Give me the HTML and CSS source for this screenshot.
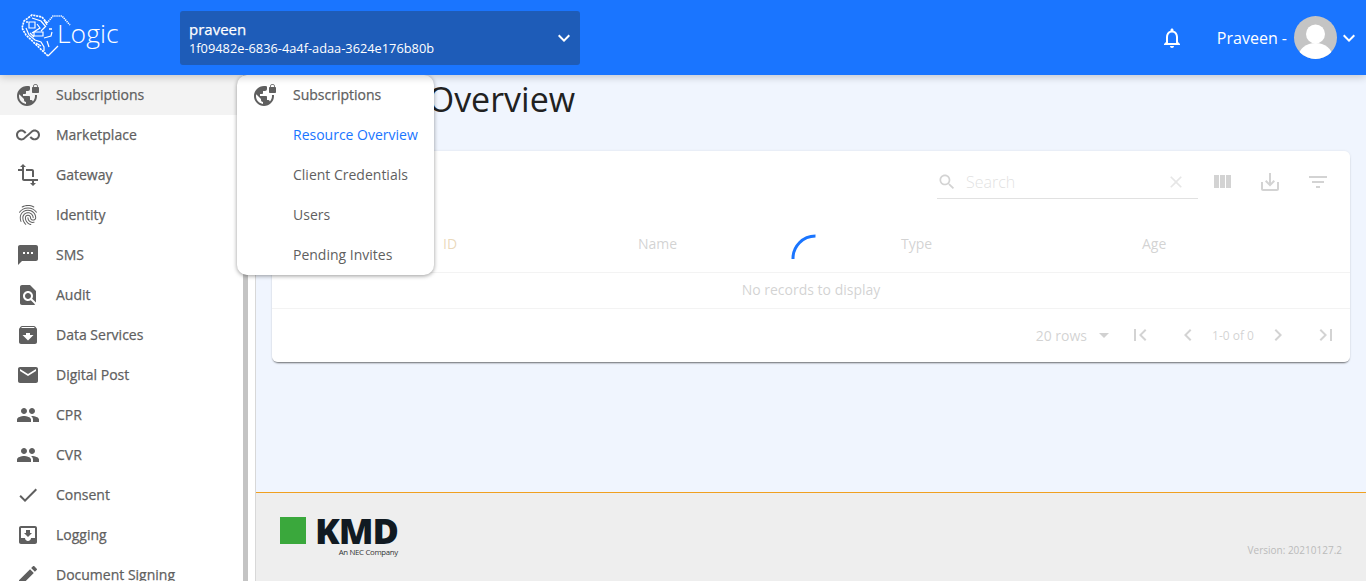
FILE: index.html
```html
<!DOCTYPE html>
<html>
	<head>
		<meta charset="UTF-8">
		<title>Resource Overview</title>
		<link rel="stylesheet" href="styles.css">
	</head>
	<body>
		<svg class="defs" width="0" height="0">
			<symbol id="i-vpn" viewBox="0 0 24 24"><path d="M22 4v-.5C22 2.12 20.88 1 19.5 1S17 2.12 17 3.5V4c-.55 0-1 .45-1 1v4c0 .55.45 1 1 1h5c.55 0 1-.45 1-1V5c0-.55-.45-1-1-1zm-.8 0h-3.4v-.5c0-.94.76-1.7 1.7-1.7s1.7.76 1.7 1.7V4zm-2.28 8c.04.33.08.66.08 1 0 2.08-.8 3.97-2.1 5.39-.26-.81-1-1.39-1.9-1.39h-1v-3c0-.55-.45-1-1-1H7v-2h2c.55 0 1-.45 1-1V8h2c1.1 0 2-.9 2-2V3.46c-.95-.3-1.95-.46-3-.46C5.48 3 1 7.48 1 13s4.48 10 10 10 10-4.48 10-10c0-.34-.02-.67-.05-1h-2.03zM10 20.93c-3.95-.49-7-3.85-7-7.93 0-.62.08-1.21.21-1.79L8 16v1c0 1.1.9 2 2 2v1.93z"/></symbol>
			<symbol id="i-inf" viewBox="0 0 24 24"><path d="M18.6 6.62c-1.44 0-2.8.56-3.77 1.53L12 10.66 10.48 12h.01L7.8 14.39c-.64.64-1.49.99-2.4.99-1.87 0-3.39-1.51-3.39-3.38S3.53 8.62 5.4 8.62c.91 0 1.76.35 2.44 1.03l1.13 1 1.51-1.34L9.22 8.2C8.2 7.18 6.84 6.62 5.4 6.62 2.42 6.62 0 9.04 0 12s2.42 5.38 5.4 5.38c1.44 0 2.8-.56 3.77-1.53l2.83-2.5.01.01L13.52 12h-.01l2.69-2.39c.64-.64 1.49-.99 2.4-.99 1.87 0 3.39 1.51 3.39 3.38s-1.52 3.38-3.39 3.38c-.9 0-1.76-.35-2.44-1.03l-1.14-1.01-1.51 1.34 1.27 1.12c1.02 1.01 2.37 1.57 3.82 1.57 2.98 0 5.4-2.41 5.4-5.38s-2.42-5.37-5.4-5.37z"/></symbol>
			<symbol id="i-transform" viewBox="0 0 24 24"><path d="M22 18v-2H8V4h2L7 1 4 4h2v2H2v2h4v8c0 1.1.9 2 2 2h8v2h-2l3 3 3-3h-2v-2h4zM10 8h6v6h2V8c0-1.1-.9-2-2-2h-6v2z"/></symbol>
			<symbol id="i-finger" viewBox="0 0 24 24"><path d="M17.81 4.47c-.08 0-.16-.02-.23-.06C15.66 3.42 14 3 12.01 3c-1.98 0-3.86.47-5.57 1.41-.24.13-.54.04-.68-.2-.13-.24-.04-.55.2-.68C7.82 2.52 9.86 2 12.01 2c2.13 0 3.99.47 6.03 1.52.25.13.34.43.21.67-.09.18-.26.28-.44.28zM3.5 9.72c-.1 0-.2-.03-.29-.09-.23-.16-.28-.47-.12-.7.99-1.4 2.25-2.5 3.75-3.27C9.98 4.04 14 4.03 17.15 5.65c1.5.77 2.76 1.86 3.75 3.25.16.22.11.54-.12.7-.23.16-.54.11-.7-.12-.9-1.26-2.04-2.25-3.39-2.94-2.87-1.47-6.54-1.47-9.4.01-1.36.7-2.5 1.7-3.4 2.96-.08.14-.23.21-.39.21zm6.25 12.07c-.13 0-.26-.05-.35-.15-.87-.87-1.34-1.43-2.01-2.64-.69-1.23-1.05-2.73-1.05-4.34 0-2.97 2.54-5.39 5.66-5.39s5.66 2.42 5.66 5.39c0 .28-.22.5-.5.5s-.5-.22-.5-.5c0-2.42-2.09-4.39-4.66-4.39-2.57 0-4.66 1.97-4.66 4.39 0 1.44.32 2.77.93 3.85.64 1.15 1.08 1.64 1.85 2.42.19.2.19.51 0 .71-.11.1-.24.15-.37.15zm7.17-1.85c-1.19 0-2.24-.3-3.1-.89-1.49-1.01-2.38-2.65-2.38-4.39 0-.28.22-.5.5-.5s.5.22.5.5c0 1.41.72 2.74 1.94 3.56.71.48 1.54.71 2.54.71.24 0 .64-.03 1.04-.1.27-.05.53.13.58.41.05.27-.13.53-.41.58-.57.11-1.07.12-1.21.12zM14.91 22c-.04 0-.09-.01-.13-.02-1.59-.44-2.63-1.03-3.72-2.1-1.4-1.39-2.17-3.24-2.17-5.22 0-1.62 1.38-2.94 3.08-2.94 1.7 0 3.08 1.32 3.08 2.94 0 1.07.93 1.94 2.08 1.94s2.08-.87 2.08-1.94c0-3.77-3.25-6.83-7.25-6.83-2.84 0-5.44 1.58-6.61 4.03-.39.81-.59 1.76-.59 2.8 0 .78.07 2.01.67 3.61.1.26-.03.55-.29.64-.26.1-.55-.04-.64-.29-.49-1.31-.73-2.61-.73-3.96 0-1.2.23-2.29.68-3.24 1.33-2.79 4.28-4.6 7.51-4.6 4.55 0 8.25 3.51 8.25 7.83 0 1.62-1.38 2.94-3.08 2.94s-3.08-1.32-3.08-2.94c0-1.07-.93-1.94-2.08-1.94s-2.08.87-2.08 1.94c0 1.71.66 3.31 1.87 4.51.95.94 1.86 1.46 3.27 1.85.27.07.42.35.35.61-.05.23-.26.38-.47.38z"/></symbol>
			<symbol id="i-sms" viewBox="0 0 24 24"><path d="M20 2H4c-1.1 0-1.99.9-1.99 2L2 22l4-4h14c1.1 0 2-.9 2-2V4c0-1.1-.9-2-2-2zM9 11H7V9h2v2zm4 0h-2V9h2v2zm4 0h-2V9h2v2z"/></symbol>
			<symbol id="i-find" viewBox="0 0 24 24"><path d="M20 19.59V8l-6-6H6c-1.1 0-1.99.9-1.99 2L4 20c0 1.1.89 2 1.99 2H18c.45 0 .85-.15 1.19-.4l-4.43-4.43c-.8.52-1.74.83-2.76.83-2.76 0-5-2.24-5-5s2.24-5 5-5 5 2.24 5 5c0 1.02-.31 1.96-.83 2.75L20 19.59zM9 13c0 1.66 1.34 3 3 3s3-1.34 3-3-1.34-3-3-3-3 1.34-3 3z"/></symbol>
			<symbol id="i-archive" viewBox="0 0 24 24"><path d="M20.54 5.23l-1.39-1.68C18.88 3.21 18.47 3 18 3H6c-.47 0-.88.21-1.16.55L3.46 5.23C3.17 5.57 3 6.02 3 6.5V19c0 1.1.9 2 2 2h14c1.1 0 2-.9 2-2V6.5c0-.48-.17-.93-.46-1.27zM12 17.5L6.5 12H10v-2h4v2h3.5L12 17.5zM5.12 5l.81-1h12l.94 1H5.12z"/></symbol>
			<symbol id="i-mail" viewBox="0 0 24 24"><path d="M20 4H4c-1.1 0-1.99.9-1.99 2L2 18c0 1.1.9 2 2 2h16c1.1 0 2-.9 2-2V6c0-1.1-.9-2-2-2zm0 4l-8 5-8-5V6l8 5 8-5v2z"/></symbol>
			<symbol id="i-people" viewBox="0 0 24 24"><path d="M16 11c1.66 0 2.99-1.34 2.99-3S17.66 5 16 5c-1.66 0-3 1.34-3 3s1.34 3 3 3zm-8 0c1.66 0 2.99-1.34 2.99-3S9.66 5 8 5C6.34 5 5 6.34 5 8s1.34 3 3 3zm0 2c-2.33 0-7 1.17-7 3.5V19h14v-2.5c0-2.33-4.67-3.5-7-3.5zm8 0c-.29 0-.62.02-.97.05 1.16.84 1.97 1.97 1.97 3.45V19h6v-2.5c0-2.33-4.67-3.5-7-3.5z"/></symbol>
			<symbol id="i-check" viewBox="0 0 24 24"><path d="M9 16.17L4.83 12l-1.42 1.41L9 19 21 7l-1.41-1.41z"/></symbol>
			<symbol id="i-inbox" viewBox="0 0 24 24"><path d="M19 3H4.99c-1.11 0-1.98.89-1.98 2L3 19c0 1.1.88 2 1.99 2H19c1.1 0 2-.9 2-2V5c0-1.11-.9-2-2-2zm0 12h-4c0 1.66-1.35 3-3 3s-3-1.34-3-3H4.99V5H19v10zm-3-5h-2V7h-4v3H8l4 4 4-4z"/></symbol>
			<symbol id="i-edit" viewBox="0 0 24 24"><path d="M3 17.25V21h3.75L17.81 9.94l-3.75-3.75L3 17.25zM20.71 7.04c.39-.39.39-1.02 0-1.41l-2.34-2.34c-.39-.39-1.02-.39-1.41 0l-1.83 1.83 3.75 3.75 1.83-1.83z"/></symbol>
			<symbol id="i-down" viewBox="0 0 24 24"><path d="M7.41 8.59L12 13.17l4.59-4.58L18 10l-6 6-6-6 1.41-1.41z"/></symbol>
			<symbol id="i-bell" viewBox="0 0 24 24"><path d="M12 22c1.1 0 2-.9 2-2h-4c0 1.1.9 2 2 2zm6-6v-5c0-3.07-1.63-5.64-4.5-6.32V4c0-.83-.67-1.5-1.5-1.5s-1.5.67-1.5 1.5v.68C7.64 5.36 6 7.92 6 11v5l-2 2v1h16v-1l-2-2zm-2 1H8v-6c0-2.48 1.51-4.5 4-4.5s4 2.02 4 4.5v6z"/></symbol>
			<symbol id="i-search" viewBox="0 0 24 24"><path d="M15.5 14h-.79l-.28-.27C15.41 12.59 16 11.11 16 9.5 16 5.91 13.09 3 9.5 3S3 5.91 3 9.5 5.91 16 9.5 16c1.61 0 3.09-.59 4.23-1.57l.27.28v.79l5 4.99L20.49 19l-4.99-5zm-6 0C7.01 14 5 11.99 5 9.5S7.01 5 9.5 5 14 7.01 14 9.5 11.99 14 9.5 14z"/></symbol>
			<symbol id="i-close" viewBox="0 0 24 24"><path d="M19 6.41L17.59 5 12 10.59 6.41 5 5 6.41 10.59 12 5 17.59 6.41 19 12 13.41 17.59 19 19 17.59 13.41 12z"/></symbol>
			<symbol id="i-columns" viewBox="0 0 24 24"><path d="M10 18h5V5h-5v13zm-6 0h5V5H4v13zM16 5v13h5V5h-5z"/></symbol>
			<symbol id="i-save" viewBox="0 0 24 24"><path d="M19 12v7H5v-7H3v7c0 1.1.9 2 2 2h14c1.1 0 2-.9 2-2v-7h-2zm-6 .67l2.59-2.58L17 11.5l-5 5-5-5 1.41-1.41L11 12.67V3h2z"/></symbol>
			<symbol id="i-filter" viewBox="0 0 24 24"><path d="M10 18h4v-2h-4v2zM3 6v2h18V6H3zm3 7h12v-2H6v2z"/></symbol>
			<symbol id="i-first" viewBox="0 0 24 24"><path d="M18.41 16.59L13.82 12l4.59-4.59L17 6l-6 6 6 6zM6 6h2v12H6z"/></symbol>
			<symbol id="i-last" viewBox="0 0 24 24"><path d="M5.59 7.41L10.18 12l-4.59 4.59L7 18l6-6-6-6zM16 6h2v12h-2z"/></symbol>
			<symbol id="i-prev" viewBox="0 0 24 24"><path d="M15.41 7.41L14 6l-6 6 6 6 1.41-1.41L10.83 12z"/></symbol>
			<symbol id="i-next" viewBox="0 0 24 24"><path d="M10 6L8.59 7.41 13.17 12l-4.58 4.59L10 18l6-6z"/></symbol>
		</svg>

		<header class="topbar">
			<div class="brand">
				<svg class="brand-mark" viewBox="0 0 52 44" fill="none" stroke="#fff">
					<path d="M28 43 L38 33" stroke-width="1.2"/>
					<path d="M27 10 L33 3 H42 L50 12" stroke-width="1.6" stroke-dasharray="1.3 .8"/>
					<path d="M28 43 L6 22 L2 15 L4 8 L12 2 L22 4 L27 10" stroke-width="1.7" stroke-dasharray="2.2 .8"/>
					<path d="M9 9h6v6h-6zM12 5l9 3 5 6M17 11l3 4-8 5M6 15l3 7 6 5 6 2 3 5v4M14 19h9v4h-9zM21 18l4-4M24 25l7-2 1-4M27 28l2 6M16 30l5 3M10 20l4 4" stroke-width="1.2"/>
					<path d="M6 9h2M24 7l3 5M29 16h3" stroke-width="1.4"/>
				</svg>
				<span class="brand-name">Logic</span>
			</div>
			<div class="org-select">
				<div>
					<div class="org-name">praveen</div>
					<div class="org-id">1f09482e-6836-4a4f-adaa-3624e176b80b</div>
				</div>
				<svg class="icon"><use href="#i-down"/></svg>
			</div>
			<div class="user-area">
				<svg class="icon bell"><use href="#i-bell"/></svg>
				<span class="user-name">Praveen -</span>
				<div class="avatar">
					<svg viewBox="0 0 43 43">
						<circle cx="21.5" cy="18" r="9.5" fill="#fff"/>
						<ellipse cx="21.5" cy="41" rx="17" ry="14" fill="#fff"/>
					</svg>
				</div>
				<svg class="icon"><use href="#i-down"/></svg>
			</div>
		</header>

		<div class="page">
			<nav class="sidebar">
				<ul class="nav">
					<li class="active"><svg class="icon"><use href="#i-vpn"/></svg>Subscriptions</li>
					<li><svg class="icon"><use href="#i-inf"/></svg>Marketplace</li>
					<li><svg class="icon"><use href="#i-transform"/></svg>Gateway</li>
					<li><svg class="icon"><use href="#i-finger"/></svg>Identity</li>
					<li><svg class="icon"><use href="#i-sms"/></svg>SMS</li>
					<li><svg class="icon"><use href="#i-find"/></svg>Audit</li>
					<li><svg class="icon"><use href="#i-archive"/></svg>Data Services</li>
					<li><svg class="icon"><use href="#i-mail"/></svg>Digital Post</li>
					<li><svg class="icon"><use href="#i-people"/></svg>CPR</li>
					<li><svg class="icon"><use href="#i-people"/></svg>CVR</li>
					<li><svg class="icon"><use href="#i-check"/></svg>Consent</li>
					<li><svg class="icon"><use href="#i-inbox"/></svg>Logging</li>
					<li><svg class="icon"><use href="#i-edit"/></svg>Document Signing</li>
				</ul>
				<div class="scrollbar"></div>
			</nav>

			<div class="submenu">
				<div class="submenu-head"><svg class="icon"><use href="#i-vpn"/></svg>Subscriptions</div>
				<div class="submenu-item current">Resource Overview</div>
				<div class="submenu-item">Client Credentials</div>
				<div class="submenu-item">Users</div>
				<div class="submenu-item">Pending Invites</div>
			</div>

			<main class="main">
				<div class="content">
					<h1 class="title">Resource Overview</h1>
					<section class="card">
						<div class="toolbar">
							<div class="search">
								<svg class="icon search-icon"><use href="#i-search"/></svg>
								<span class="search-text">Search</span>
								<svg class="icon clear-icon"><use href="#i-close"/></svg>
							</div>
							<div class="tool"><svg class="icon"><use href="#i-columns"/></svg></div>
							<div class="tool"><svg class="icon"><use href="#i-save"/></svg></div>
							<div class="tool"><svg class="icon"><use href="#i-filter"/></svg></div>
						</div>
						<div class="thead">
							<span></span>
							<span class="sorted">ID</span>
							<span>Name</span>
							<span>Type</span>
							<span>Age</span>
						</div>
						<div class="empty">No records to display</div>
						<div class="pager">
							<span class="rows">20 rows</span>
							<span class="caret"></span>
							<div class="tool"><svg class="icon"><use href="#i-first"/></svg></div>
							<div class="tool"><svg class="icon"><use href="#i-prev"/></svg></div>
							<span class="range">1-0 of 0</span>
							<div class="tool"><svg class="icon"><use href="#i-next"/></svg></div>
							<div class="tool"><svg class="icon"><use href="#i-last"/></svg></div>
						</div>
						<div class="loading">
							<svg class="spinner" viewBox="0 0 28 28" fill="none"><path d="M3 26 A 22.5 22.5 0 0 1 25.5 3" stroke="#1a75ff" stroke-width="3"/></svg>
						</div>
					</section>
				</div>
				<footer class="footer">
					<div class="kmd">
						<span class="kmd-square"></span>
						<div>
							<div class="kmd-name">KMD</div>
							<div class="kmd-sub">An NEC Company</div>
						</div>
					</div>
					<span class="version">Version: 20210127.2</span>
				</footer>
			</main>
		</div>
	</body>
</html>
```

FILE: styles.css
```css
*{
	box-sizing: border-box;
}
html,body{
	height: 100%;
}
body{
	margin: 0;
	height: 581px;
	overflow: hidden;
	display: flex;
	flex-direction: column;
	font-family: "Open Sans", "Noto Sans", sans-serif;
	font-size: 14px;
	color: #5f5f5f;
	background: #fff;
}
.defs{
	position: absolute;
}
.icon{
	width: 24px;
	height: 24px;
	fill: currentColor;
	flex: none;
}

/* top bar */
.topbar{
	height: 75px;
	flex: none;
	display: flex;
	align-items: center;
	background: #1a75ff;
	color: #fff;
	position: relative;
	z-index: 2;
	box-shadow: 0 2px 8px rgba(0,0,0,0.2);
}
.brand{
	width: 180px;
	height: 75px;
	padding: 13px 0 0 20px;
	display: flex;
	align-items: flex-start;
	flex: none;
}
.brand-mark{
	width: 52px;
	height: 44px;
	flex: none;
}
.brand-name{
	font-size: 26.5px;
	font-weight: 300;
	line-height: 40px;
	margin-left: -15px;
}
.org-select{
	width: 400px;
	height: 54px;
	background: #1e5cb8;
	border-radius: 3px;
	padding: 1px 4px 0 9px;
	display: flex;
	align-items: center;
	justify-content: space-between;
}
.org-name{
	font-size: 15px;
	font-weight: 500;
	line-height: 20px;
	-webkit-text-stroke: 0.25px;
}
.org-id{
	font-size: 12.8px;
	line-height: 18px;
}
.user-area{
	margin-left: auto;
	display: flex;
	align-items: center;
	padding-right: 5px;
}
.user-name{
	font-size: 16px;
	margin: 0 7px 0 33px;
}
.avatar{
	width: 43px;
	height: 43px;
	border-radius: 50%;
	background: #c4c4c4;
	overflow: hidden;
}
.avatar svg{
	display: block;
	width: 43px;
	height: 43px;
}

/* side menu */
.page{
	flex: 1;
	display: flex;
	min-height: 0;
	position: relative;
}
.sidebar{
	width: 256px;
	flex: none;
	display: flex;
	border-right: 1px solid #d8d8d8;
	background: #fff;
}
.nav{
	list-style: none;
	margin: 0;
	padding: 0;
	width: 243px;
}
.nav li{
	height: 40px;
	line-height: 40px;
	padding-left: 16px;
	display: flex;
	align-items: center;
	gap: 16px;
	font-weight: 500;
	-webkit-text-stroke: 0.25px;
	white-space: nowrap;
}
.nav li.active{
	background: #f3f3f3;
}
.scrollbar{
	width: 5px;
	background: #c4c4c4;
	height: 100%;
}

/* popup sub menu */
.submenu{
	position: absolute;
	left: 237px;
	top: 0;
	width: 197px;
	height: 200px;
	background: #fff;
	border-radius: 10px;
	box-shadow: 0 1px 4px rgba(0,0,0,0.4);
	z-index: 1;
}
.submenu-head{
	height: 40px;
	line-height: 40px;
	padding-left: 16px;
	display: flex;
	align-items: center;
	gap: 16px;
	font-weight: 500;
	-webkit-text-stroke: 0.25px;
}
.submenu-item{
	height: 40px;
	line-height: 40px;
	padding-left: 56px;
	white-space: nowrap;
}
.submenu-item.current{
	color: #1a75ff;
}

/* main part */
.main{
	flex: 1;
	min-width: 0;
	display: flex;
	flex-direction: column;
	background: #f0f5fe;
}
.content{
	flex: 1;
	padding: 0 16px;
}
.title{
	margin: 0;
	height: 76px;
	font-size: 34px;
	font-weight: 400;
	line-height: 48px;
	color: #212121;
}
.card{
	position: relative;
	height: 211px;
	background: #fff;
	border-radius: 6px;
	box-shadow: 0 2px 2px -1px rgba(0,0,0,0.55), 0 0 3px rgba(0,0,0,0.08);
	color: #6b6b6b;
}
.toolbar{
	height: 72px;
	padding: 7px 8px 0 0;
	display: flex;
	justify-content: flex-end;
	align-items: flex-start;
}
.tool{
	width: 48px;
	height: 48px;
	display: flex;
	align-items: center;
	justify-content: center;
	flex: none;
}
.search{
	width: 261px;
	height: 41px;
	padding: 8px 12px 0 0;
	display: flex;
	align-items: center;
	border-bottom: 1px solid #999;
}
.search-icon{
	width: 20px;
	height: 20px;
	margin-right: 9px;
}
.search-text{
	flex: 1;
	font-size: 16px;
	font-weight: 300;
	color: #9a9a9a;
}
.clear-icon{
	width: 20px;
	height: 20px;
	color: #aaa;
}
.thead{
	height: 50px;
	padding-bottom: 8px;
	display: grid;
	grid-template-columns: 171px 195px 263px 241px 1fr;
	align-items: center;
	border-bottom: 1px solid #d8d8d8;
}
.sorted{
	color: #b87f20;
}
.empty{
	height: 36px;
	line-height: 33px;
	text-align: center;
	border-bottom: 1px solid #d8d8d8;
}
.pager{
	height: 53px;
	padding-bottom: 1px;
	display: flex;
	justify-content: flex-end;
	align-items: center;
}
.rows{
	font-size: 14px;
	margin-right: 12px;
}
.caret{
	width: 0;
	height: 0;
	border-left: 5px solid transparent;
	border-right: 5px solid transparent;
	border-top: 5px solid #666;
	margin-right: 7px;
}
.range{
	font-size: 12px;
	width: 42px;
	text-align: center;
	white-space: nowrap;
}
.loading{
	position: absolute;
	left: 0;
	top: 0;
	right: 0;
	bottom: 0;
	border-radius: 6px;
	background: rgba(255,255,255,0.7);
}
.spinner{
	position: absolute;
	left: 518px;
	top: 82px;
	width: 28px;
	height: 28px;
}

/* footer */
.footer{
	height: 89px;
	flex: none;
	background: #eeeeee;
	border-top: 1px solid #f0a020;
	padding: 24px 24px 0;
	display: flex;
	justify-content: space-between;
	align-items: flex-start;
}
.kmd{
	display: flex;
	gap: 10px;
}
.kmd-square{
	width: 26px;
	height: 27px;
	background: #3aa83c;
}
.kmd-name{
	font-size: 36px;
	font-weight: 800;
	line-height: 27px;
	letter-spacing: -1px;
	margin-left: -1px;
	color: #111a22;
}
.kmd-sub{
	font-size: 7.8px;
	line-height: 12px;
	margin-top: 2px;
	letter-spacing: -0.3px;
	text-align: right;
	color: #333;
}
.version{
	font-size: 10px;
	color: #bbbbbb;
	margin-top: 26px;
}
```
